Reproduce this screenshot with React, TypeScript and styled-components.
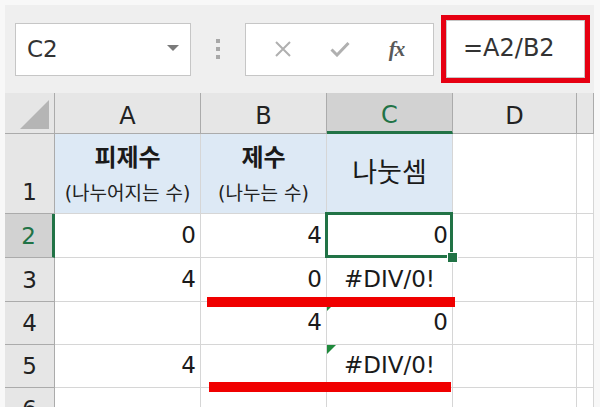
import React from 'react'
import styled, { createGlobalStyle } from 'styled-components'

const GlobalStyle = createGlobalStyle`
  html, body {
    margin: 0;
    padding: 0;
    background: #f8f8f8;
  }
  * {
    box-sizing: border-box;
  }
`

const FONT = `"DejaVu Sans", "Noto Sans CJK KR", sans-serif`
const GRID = '#d6d6d6'
const GREEN = '#217346'

const Frame = styled.div`
  width: 600px;
  height: 407px;
  padding: 5px 6px 0 5px;
  font-family: ${FONT};
  overflow: hidden;
`

const Toolbar = styled.div`
  height: 88px;
  background: #efefef;
  display: flex;
  align-items: center;
  padding: 0 3px 0 10px;
`

const NameBox = styled.div`
  width: 176px;
  height: 53px;
  background: #fff;
  border: 1px solid #c6c6c6;
  display: flex;
  align-items: center;
  justify-content: space-between;
  padding: 0 11px 0 11px;
  font-size: 23px;
  color: #333;
`

const Caret = styled.span`
  width: 0;
  height: 0;
  border-left: 6px solid transparent;
  border-right: 6px solid transparent;
  border-top: 6px solid #7a7a7a;
  margin-top: -3px;
`

const Grip = styled.div`
  width: 54px;
  display: flex;
  flex-direction: column;
  align-items: center;
  gap: 4px;
  span {
    width: 4px;
    height: 4px;
    background: #a8a8a8;
  }
`

const ButtonBox = styled.div`
  width: 189px;
  height: 53px;
  background: #fff;
  border: 1px solid #c6c6c6;
  display: flex;
  align-items: center;
  justify-content: space-around;
  padding: 0 8px;
`

const ToolIcon = styled.span<{ $dark?: boolean }>`
  width: 40px;
  display: flex;
  justify-content: center;
  color: ${(p) => (p.$dark ? '#555' : '#b0b0b0')};
`

const Fx = styled.span`
  font-family: "Liberation Serif", serif;
  font-style: italic;
  font-weight: bold;
  font-size: 21px;
  color: #595959;
  letter-spacing: -1px;
`

const FormulaBox = styled.div<{ $marked?: boolean }>`
  margin-left: 7px;
  width: 149px;
  height: 68px;
  border: 5px solid ${(p) => (p.$marked ? '#e60012' : 'transparent')};
  display: flex;
`

const FormulaInput = styled.div`
  flex: 1;
  background: #fff;
  border: 1px solid #c6c6c6;
  display: flex;
  align-items: center;
  padding: 0 0 2px 16px;
  font-size: 24px;
  color: #333;
`

const Sheet = styled.div`
  position: relative;
  display: grid;
  grid-template-columns: 50px 146px 126px 126px 124px 17px;
  grid-template-rows: 41px 80px 44px 44px 43px 43px 43px;
  background: #fff;
`

const ColHead = styled.div<{ $active?: boolean }>`
  background: ${(p) => (p.$active ? '#d2d2d2' : '#e6e6e6')};
  border-right: 1px solid #ababab;
  border-bottom: ${(p) => (p.$active ? `3px solid ${GREEN}` : '1px solid #ababab')};
  display: flex;
  align-items: center;
  justify-content: center;
  padding-top: 6px;
  font-size: 24px;
  color: ${(p) => (p.$active ? GREEN : '#222')};
  &:last-child {
    border-right: none;
  }
`

const Corner = styled.div`
  background: #e6e6e6;
  border-right: 1px solid #ababab;
  border-bottom: 1px solid #ababab;
  position: relative;
  &::after {
    content: '';
    position: absolute;
    right: 5px;
    bottom: 4px;
    width: 0;
    height: 0;
    border-left: 29px solid transparent;
    border-bottom: 29px solid #b5b5b5;
  }
`

const RowHead = styled.div<{ $active?: boolean }>`
  background: ${(p) => (p.$active ? '#d2d2d2' : '#e6e6e6')};
  border-right: ${(p) => (p.$active ? `3px solid ${GREEN}` : '1px solid #ababab')};
  border-bottom: 1px solid #ababab;
  display: flex;
  align-items: flex-end;
  justify-content: center;
  padding-bottom: 9px;
  font-size: 23px;
  line-height: 1;
  color: ${(p) => (p.$active ? GREEN : '#222')};
`

const Cell = styled.div<{ $head?: boolean; $align?: 'left' | 'right' | 'center' }>`
  position: relative;
  background: ${(p) => (p.$head ? '#dde9f5' : '#fff')};
  border-right: 1px solid ${GRID};
  border-bottom: 1px solid ${GRID};
  display: flex;
  align-items: flex-end;
  justify-content: ${(p) =>
    p.$align === 'right' ? 'flex-end' : p.$align === 'center' ? 'center' : 'flex-start'};
  padding: 0 4px 10px 4px;
  font-size: 23px;
  line-height: 1;
  color: #1a1a1a;
`

const HeadStack = styled.div`
  width: 100%;
  height: 100%;
  display: flex;
  flex-direction: column;
  align-items: center;
  justify-content: space-between;
  padding: 10px 0 0;
`

const Title = styled.div`
  font-family: "Noto Sans CJK KR", sans-serif;
  font-size: 24px;
  font-weight: bold;
`

const Sub = styled.div`
  font-size: 19px;
  color: #222;
`

const Label = styled.div`
  align-self: center;
  font-size: 27px;
  padding-top: 8px;
`

const Selected = styled.div`
  position: absolute;
  z-index: 2;
  inset: -2px -1px -1px -2px;
  border: 3px solid ${GREEN};
  pointer-events: none;
  &::after {
    content: '';
    position: absolute;
    right: -8px;
    bottom: -8px;
    width: 9px;
    height: 9px;
    background: ${GREEN};
    border: 1px solid #fff;
  }
`

const Flag = styled.span`
  position: absolute;
  left: 0;
  top: 0;
  width: 0;
  height: 0;
  border-top: 9px solid #1f8a3c;
  border-right: 9px solid transparent;
`

const Strike = styled.div<{ $top: number; $left: number; $width: number }>`
  position: absolute;
  z-index: 3;
  top: ${(p) => p.$top}px;
  left: ${(p) => p.$left}px;
  width: ${(p) => p.$width}px;
  height: 10px;
  background: #f00000;
`

type Row = {
  n: number
  cells: { text?: string; align?: 'left' | 'right' | 'center'; flag?: boolean }[]
}

const rows: Row[] = [
  { n: 2, cells: [{ text: '0', align: 'right' }, { text: '4', align: 'right' }, { text: '0', align: 'right' }, {}, {}] },
  { n: 3, cells: [{ text: '4', align: 'right' }, { text: '0', align: 'right' }, { text: '#DIV/0!', align: 'center' }, {}, {}] },
  { n: 4, cells: [{}, { text: '4', align: 'right' }, { text: '0', align: 'right', flag: true }, {}, {}] },
  { n: 5, cells: [{ text: '4', align: 'right' }, {}, { text: '#DIV/0!', align: 'center', flag: true }, {}, {}] },
  { n: 6, cells: [{}, {}, {}, {}, {}] },
]

export default function App() {
  return (
    <>
      <GlobalStyle />
      <Frame>
        <Toolbar>
          <NameBox>
            C2
            <Caret />
          </NameBox>
          <Grip>
            <span />
            <span />
            <span />
          </Grip>
          <ButtonBox>
            <ToolIcon>
              <svg width="18" height="18" viewBox="0 0 18 18">
                <path d="M2 2 L16 16 M16 2 L2 16" stroke="currentColor" strokeWidth="2" fill="none" />
              </svg>
            </ToolIcon>
            <ToolIcon>
              <svg width="20" height="16" viewBox="0 0 20 16">
                <path d="M1.5 8.5 L7 14 L18.5 2" stroke="currentColor" strokeWidth="3" fill="none" />
              </svg>
            </ToolIcon>
            <ToolIcon $dark>
              <Fx>fx</Fx>
            </ToolIcon>
          </ButtonBox>
          <FormulaBox $marked>
            <FormulaInput>=A2/B2</FormulaInput>
          </FormulaBox>
        </Toolbar>
        <Sheet>
          <Corner />
          <ColHead>A</ColHead>
          <ColHead>B</ColHead>
          <ColHead $active>C</ColHead>
          <ColHead>D</ColHead>
          <ColHead />

          <RowHead>1</RowHead>
          <Cell $head>
            <HeadStack>
              <Title>피제수</Title>
              <Sub>(나누어지는 수)</Sub>
            </HeadStack>
          </Cell>
          <Cell $head>
            <HeadStack>
              <Title>제수</Title>
              <Sub>(나누는 수)</Sub>
            </HeadStack>
          </Cell>
          <Cell $head $align="center">
            <Label>나눗셈</Label>
          </Cell>
          <Cell />
          <Cell />

          {rows.map((r) => (
            <React.Fragment key={r.n}>
              <RowHead $active={r.n === 2}>{r.n}</RowHead>
              {r.cells.map((c, i) => (
                <Cell key={i} $align={c.align}>
                  {c.flag && <Flag />}
                  {c.text}
                  {r.n === 2 && i === 2 && <Selected />}
                </Cell>
              ))}
            </React.Fragment>
          ))}

          <Strike $top={204} $left={202} $width={248} />
          <Strike $top={289} $left={204} $width={242} />
        </Sheet>
      </Frame>
    </>
  )
}
